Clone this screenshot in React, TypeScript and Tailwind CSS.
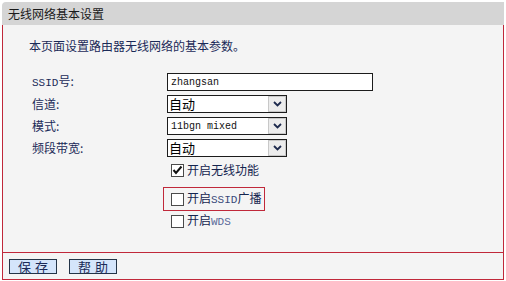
import React from 'react';

const labelFont = "font-['Noto_Sans_CJK_SC',sans-serif]";
const monoFont = "font-['Liberation_Mono',monospace]";

const Chevron: React.FC = () => (
  <svg width="9" height="6" viewBox="0 0 9 6">
    <polyline points="1,1 4.5,4.5 8,1" fill="none" stroke="#1d2a4d" strokeWidth="1.8" />
  </svg>
);

const Select: React.FC<{ value: string; mono?: boolean }> = ({ value, mono }) => (
  <div className="w-[120px] h-[18px] border border-[#1c1c1c] bg-white flex items-center justify-between">
    <span
      className={
        mono
          ? `${monoFont} text-[10px] pl-[3px] text-[#111]`
          : `${labelFont} text-[13px] leading-[16px] pl-[1px] text-black`
      }
    >
      {value}
    </span>
    <span className="w-[18px] h-[16px] bg-[#ececec] border border-[#c8c8c8] flex items-center justify-center">
      <Chevron />
    </span>
  </div>
);

const Checkbox: React.FC<{ checked?: boolean }> = ({ checked }) => (
  <span className="w-[13px] h-[13px] border border-[#4a4a4a] bg-white flex items-center justify-center shrink-0">
    {checked && (
      <svg width="11" height="11" viewBox="0 0 11 11">
        <polyline points="1.5,5 4,8 9.5,1.5" fill="none" stroke="#111" strokeWidth="2" />
      </svg>
    )}
  </span>
);

const rows = [
  { label: '信道:', type: 'select', value: '自动' },
  { label: '模式:', type: 'select', value: '11bgn mixed', mono: true },
  { label: '频段带宽:', type: 'select', value: '自动' },
];

const App: React.FC = () => {
  return (
    <div className={`w-[506px] h-[281px] bg-white pt-[2px] pl-[2px] ${labelFont}`}>
      <div className="w-[502px] flex flex-col">
        <div className="h-[23px] bg-[#d5d5d5] rounded-tl-[4px] pl-[6px] flex items-center text-[12px] text-[#1a1a1a]">
          无线网络基本设置
        </div>

        <div className="h-[228px] border-x border-b border-[#c0283a] bg-[#f4f4f4] pl-[26px] pt-[13px] flex flex-col">
          <div className="h-[16px] leading-[16px] text-[12px] text-[#1b2a58]">
            本页面设置路由器无线网络的基本参数。
          </div>

          <div className="mt-[19px] flex flex-col gap-[4px]">
            <div className="flex items-center h-[18px]">
              <span className="w-[138px] pl-[3px] text-[12px] text-[#1b2a58]">
                <span className={`${monoFont} text-[11px]`}>SSID</span>号:
              </span>
              <div className="w-[206px] h-[18px] border border-[#1c1c1c] bg-white flex items-center">
                <span className={`${monoFont} text-[10px] pl-[3px] text-[#111]`}>zhangsan</span>
              </div>
            </div>
            {rows.map((r) => (
              <div key={r.label} className="flex items-center h-[18px]">
                <span className="w-[138px] pl-[3px] text-[12px] text-[#1b2a58]">{r.label}</span>
                <Select value={r.value} mono={r.mono} />
              </div>
            ))}
          </div>

          <div className="ml-[138px] mt-[4px] flex flex-col">
            <div className="h-[18px] flex items-center gap-[3px] pl-[4px] text-[12px] text-[#14244f]">
              <Checkbox checked />
              <span>开启无线功能</span>
            </div>
            <div className="-ml-[4px] mt-[8px] w-[102px] h-[24px] border border-[#c0283a] flex items-center gap-[3px] pl-[7px] text-[12px] text-[#14244f]">
              <Checkbox />
              <span>
                开启<span className={`${monoFont} text-[11px] text-[#3a4a7a]`}>SSID</span>广播
              </span>
            </div>
            <div className="h-[18px] mt-[1px] flex items-center gap-[3px] pl-[4px] text-[12px] text-[#14244f]">
              <Checkbox />
              <span>
                开启<span className={`${monoFont} text-[11px] text-[#5a6a9a]`}>WDS</span>
              </span>
            </div>
          </div>
        </div>

        <div className="h-[27px] border-x border-b border-[#c0283a] bg-[#f4f4f4] pl-[6px] flex items-center gap-[12px]">
          <button className="w-[48px] h-[15px] bg-[#d4e5fb] border border-[#233447] text-[13px] leading-[13px] text-[#1b2a58] tracking-[4px] pl-[4px]">
            保存
          </button>
          <button className="w-[48px] h-[15px] bg-[#d4e5fb] border border-[#233447] text-[13px] leading-[13px] text-[#1b2a58] tracking-[4px] pl-[4px]">
            帮助
          </button>
        </div>
      </div>
    </div>
  );
};

export default App;
